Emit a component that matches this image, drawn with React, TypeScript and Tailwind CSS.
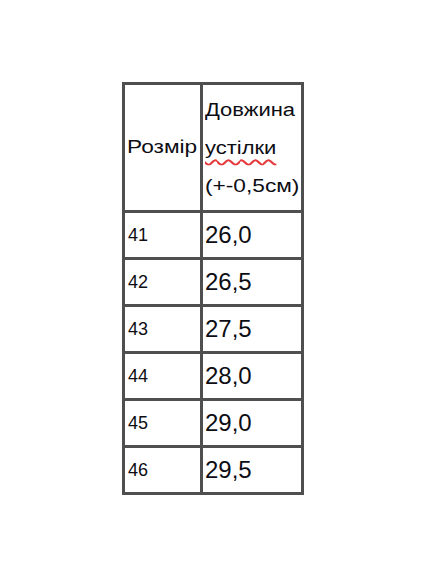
const sizes = [
  { size: '41', length: '26,0' },
  { size: '42', length: '26,5' },
  { size: '43', length: '27,5' },
  { size: '44', length: '28,0' },
  { size: '45', length: '29,0' },
  { size: '46', length: '29,5' },
];

export default function App() {
  return (
    <div className="min-h-[570px] w-full bg-white pt-[82px] pl-[122px]">
      <div className="grid w-fit grid-cols-[75px_98px] gap-[3px] bg-[#4f4f4f] p-[3px] font-['Liberation_Sans',Arial,sans-serif] text-[#0d0d14]">
        {/* Header: text is drawn a little wide, as in the source scan */}
        <div className="flex h-[125px] items-center bg-white pl-[2px] text-[18px]">
          <span className="inline-block origin-left scale-x-[1.26] whitespace-nowrap">Розмір</span>
        </div>
        <div className="flex h-[125px] flex-col justify-center bg-white pl-[2px] text-[18px] leading-[38px]">
          <span className="inline-block origin-left scale-x-[1.22] whitespace-nowrap">Довжина</span>
          <span className="inline-block origin-left scale-x-[1.22] whitespace-nowrap">
            <span className="underline decoration-[#e5383b] decoration-wavy decoration-[1.5px] underline-offset-[5px]">
              устілки
            </span>
          </span>
          <span className="inline-block origin-left scale-x-[1.26] whitespace-nowrap">(+-0,5см)</span>
        </div>

        {/* Rows */}
        {sizes.map(row => (
          <div key={row.size} className="contents">
            <div className="flex h-[44px] items-center bg-white pl-[3px] text-[18px]">
              {row.size}
            </div>
            <div className="flex h-[44px] items-center bg-white pl-[2px] text-[24px]">
              {row.length}
            </div>
          </div>
        ))}
      </div>
    </div>
  );
}
